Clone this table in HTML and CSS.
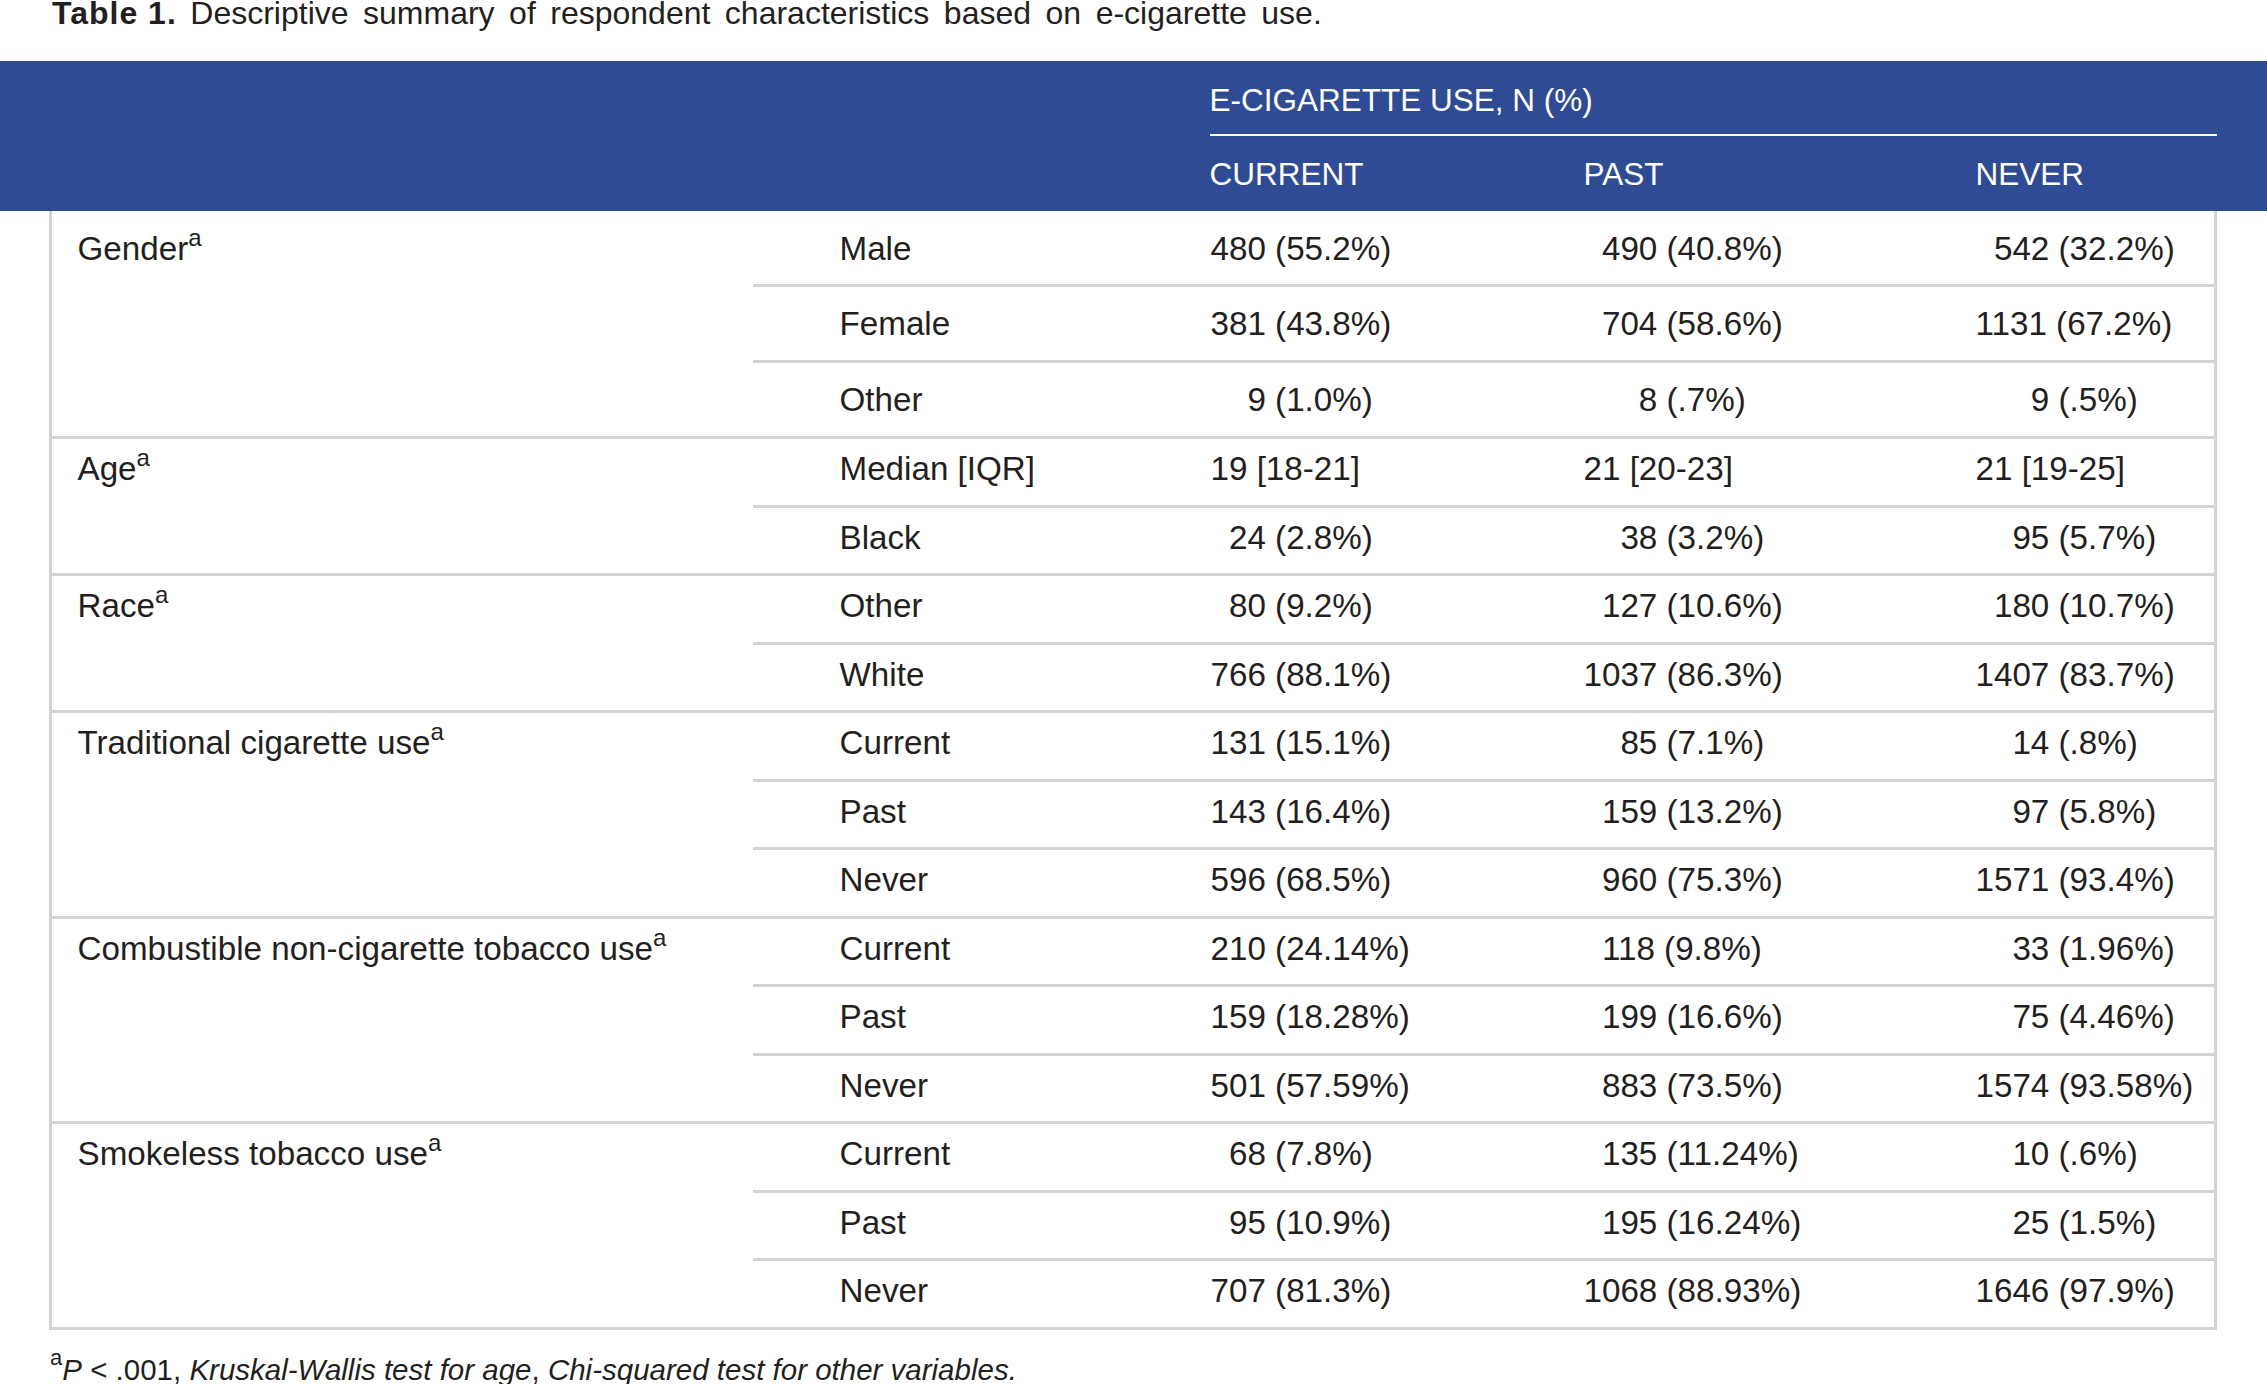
FILE: index.html
```html
<!DOCTYPE html>
<html lang="en">
<head>
<meta charset="utf-8">
<title>Table 1. Descriptive summary of respondent characteristics</title>
<link rel="stylesheet" href="styles.css">
</head>
<body>
<div class="page">
  <p class="caption"><b class="caption-label">Table 1.</b> Descriptive summary of respondent characteristics based on e-cigarette use.</p>

  <div class="thead">
    <div class="thead-inner">
      <div class="spanner">E-CIGARETTE USE, N (%)</div>
      <div class="colheads">
        <div>CURRENT</div>
        <div>PAST</div>
        <div>NEVER</div>
      </div>
    </div>
  </div>

  <div class="tbody">
    <div class="group group-tall">
      <div class="label">Gender<sup>a</sup></div>
      <div class="rows">
        <div class="row"><div class="sub">Male</div><div class="val">480 (55.2%)</div><div class="val p1">490 (40.8%)</div><div class="val p1">542 (32.2%)</div></div>
        <div class="row"><div class="sub">Female</div><div class="val">381 (43.8%)</div><div class="val p1">704 (58.6%)</div><div class="val">1131 (67.2%)</div></div>
        <div class="row"><div class="sub">Other</div><div class="val p2">9 (1.0%)</div><div class="val p3">8 (.7%)</div><div class="val p3">9 (.5%)</div></div>
      </div>
    </div>

    <div class="group">
      <div class="label">Age<sup>a</sup></div>
      <div class="rows">
        <div class="row"><div class="sub">Median [IQR]</div><div class="val">19 [18-21]</div><div class="val">21 [20-23]</div><div class="val">21 [19-25]</div></div>
        <div class="row"><div class="sub">Black</div><div class="val p1">24 (2.8%)</div><div class="val p2">38 (3.2%)</div><div class="val p2">95 (5.7%)</div></div>
      </div>
    </div>

    <div class="group">
      <div class="label">Race<sup>a</sup></div>
      <div class="rows">
        <div class="row"><div class="sub">Other</div><div class="val p1">80 (9.2%)</div><div class="val p1">127 (10.6%)</div><div class="val p1">180 (10.7%)</div></div>
        <div class="row"><div class="sub">White</div><div class="val">766 (88.1%)</div><div class="val">1037 (86.3%)</div><div class="val">1407 (83.7%)</div></div>
      </div>
    </div>

    <div class="group">
      <div class="label">Traditional cigarette use<sup>a</sup></div>
      <div class="rows">
        <div class="row"><div class="sub">Current</div><div class="val">131 (15.1%)</div><div class="val p2">85 (7.1%)</div><div class="val p2">14 (.8%)</div></div>
        <div class="row"><div class="sub">Past</div><div class="val">143 (16.4%)</div><div class="val p1">159 (13.2%)</div><div class="val p2">97 (5.8%)</div></div>
        <div class="row"><div class="sub">Never</div><div class="val">596 (68.5%)</div><div class="val p1">960 (75.3%)</div><div class="val">1571 (93.4%)</div></div>
      </div>
    </div>

    <div class="group">
      <div class="label">Combustible non-cigarette tobacco use<sup>a</sup></div>
      <div class="rows">
        <div class="row"><div class="sub">Current</div><div class="val">210 (24.14%)</div><div class="val p1">118 (9.8%)</div><div class="val p2">33 (1.96%)</div></div>
        <div class="row"><div class="sub">Past</div><div class="val">159 (18.28%)</div><div class="val p1">199 (16.6%)</div><div class="val p2">75 (4.46%)</div></div>
        <div class="row"><div class="sub">Never</div><div class="val">501 (57.59%)</div><div class="val p1">883 (73.5%)</div><div class="val">1574 (93.58%)</div></div>
      </div>
    </div>

    <div class="group">
      <div class="label">Smokeless tobacco use<sup>a</sup></div>
      <div class="rows">
        <div class="row"><div class="sub">Current</div><div class="val p1">68 (7.8%)</div><div class="val p1">135 (11.24%)</div><div class="val p2">10 (.6%)</div></div>
        <div class="row"><div class="sub">Past</div><div class="val p1">95 (10.9%)</div><div class="val p1">195 (16.24%)</div><div class="val p2">25 (1.5%)</div></div>
        <div class="row"><div class="sub">Never</div><div class="val">707 (81.3%)</div><div class="val">1068 (88.93%)</div><div class="val">1646 (97.9%)</div></div>
      </div>
    </div>
  </div>

  <p class="footnote"><sup>a</sup><i>P</i> &lt; .001, <i>Kruskal-Wallis test for age</i>, <i>Chi-squared test for other variables.</i></p>
</div>
</body>
</html>
```

FILE: styles.css
```css
html, body {
  margin: 0;
  padding: 0;
  background: #ffffff;
}

body {
  color: #231f20;
  font-family: "Liberation Sans", Arial, Helvetica, sans-serif;
}

.page {
  width: 2267px;
}

/* Caption */
.caption {
  margin: 0 0 35px;
  padding-left: 52px;
  font-size: 32px;
  line-height: 26px;
  word-spacing: 5.6px;
  white-space: nowrap;
}

.caption-label {
  font-weight: 700;
  word-spacing: 0;
  letter-spacing: 1px;
  margin-right: -1px;
}

/* Blue header band */
.thead {
  background: #2e4b93;
  color: #ffffff;
  height: 150px;
  box-sizing: border-box;
  padding: 20.5px 50px 0 1209.5px;
  font-size: 31.5px;
  line-height: 36px;
}

.spanner {
  padding-bottom: 16.5px;
  border-bottom: 2px solid #ffffff;
  white-space: nowrap;
}

.colheads {
  display: grid;
  grid-template-columns: 374px 392px 1fr;
  padding-top: 19.5px;
}

/* Body */
.tbody {
  margin: 0 50px 0 49px;
  border: 3px solid #d1d3d4;
  border-top: 0;
  font-size: 33.2px;
  line-height: 38px;
}

.group {
  display: flex;
  border-bottom: 3px solid #d1d3d4;
}

.group:last-child {
  border-bottom: 0;
}

.label {
  flex: none;
  width: 701px;
  box-sizing: border-box;
  padding: 11px 0 0 25.5px;
  white-space: nowrap;
}

.group-tall .label {
  padding-top: 19px;
}

.rows {
  flex: 1;
  min-width: 0;
}

.row {
  display: grid;
  grid-template-columns: 457.5px 373px 392px 1fr;
  padding: 11px 0 16.5px;
  border-bottom: 3px solid #d1d3d4;
  white-space: nowrap;
}

.row:last-child {
  border-bottom: 0;
}

.group-tall .row {
  padding: 17.5px 0;
}

.group-tall .row:first-child {
  padding: 19px 0 16px;
}

.sub {
  padding-left: 86.5px;
}

.p1 { padding-left: 1ch; }
.p2 { padding-left: 2ch; }
.p3 { padding-left: 3ch; }

.label sup {
  font-size: 24px;
  line-height: 0;
  vertical-align: 14px;
}

/* Footnote */
.footnote {
  margin: 25.5px 0 0;
  padding-left: 50px;
  font-size: 29.5px;
  line-height: 29px;
  white-space: nowrap;
}

.footnote sup {
  font-size: 22px;
  line-height: 0;
  vertical-align: 15px;
}
```
